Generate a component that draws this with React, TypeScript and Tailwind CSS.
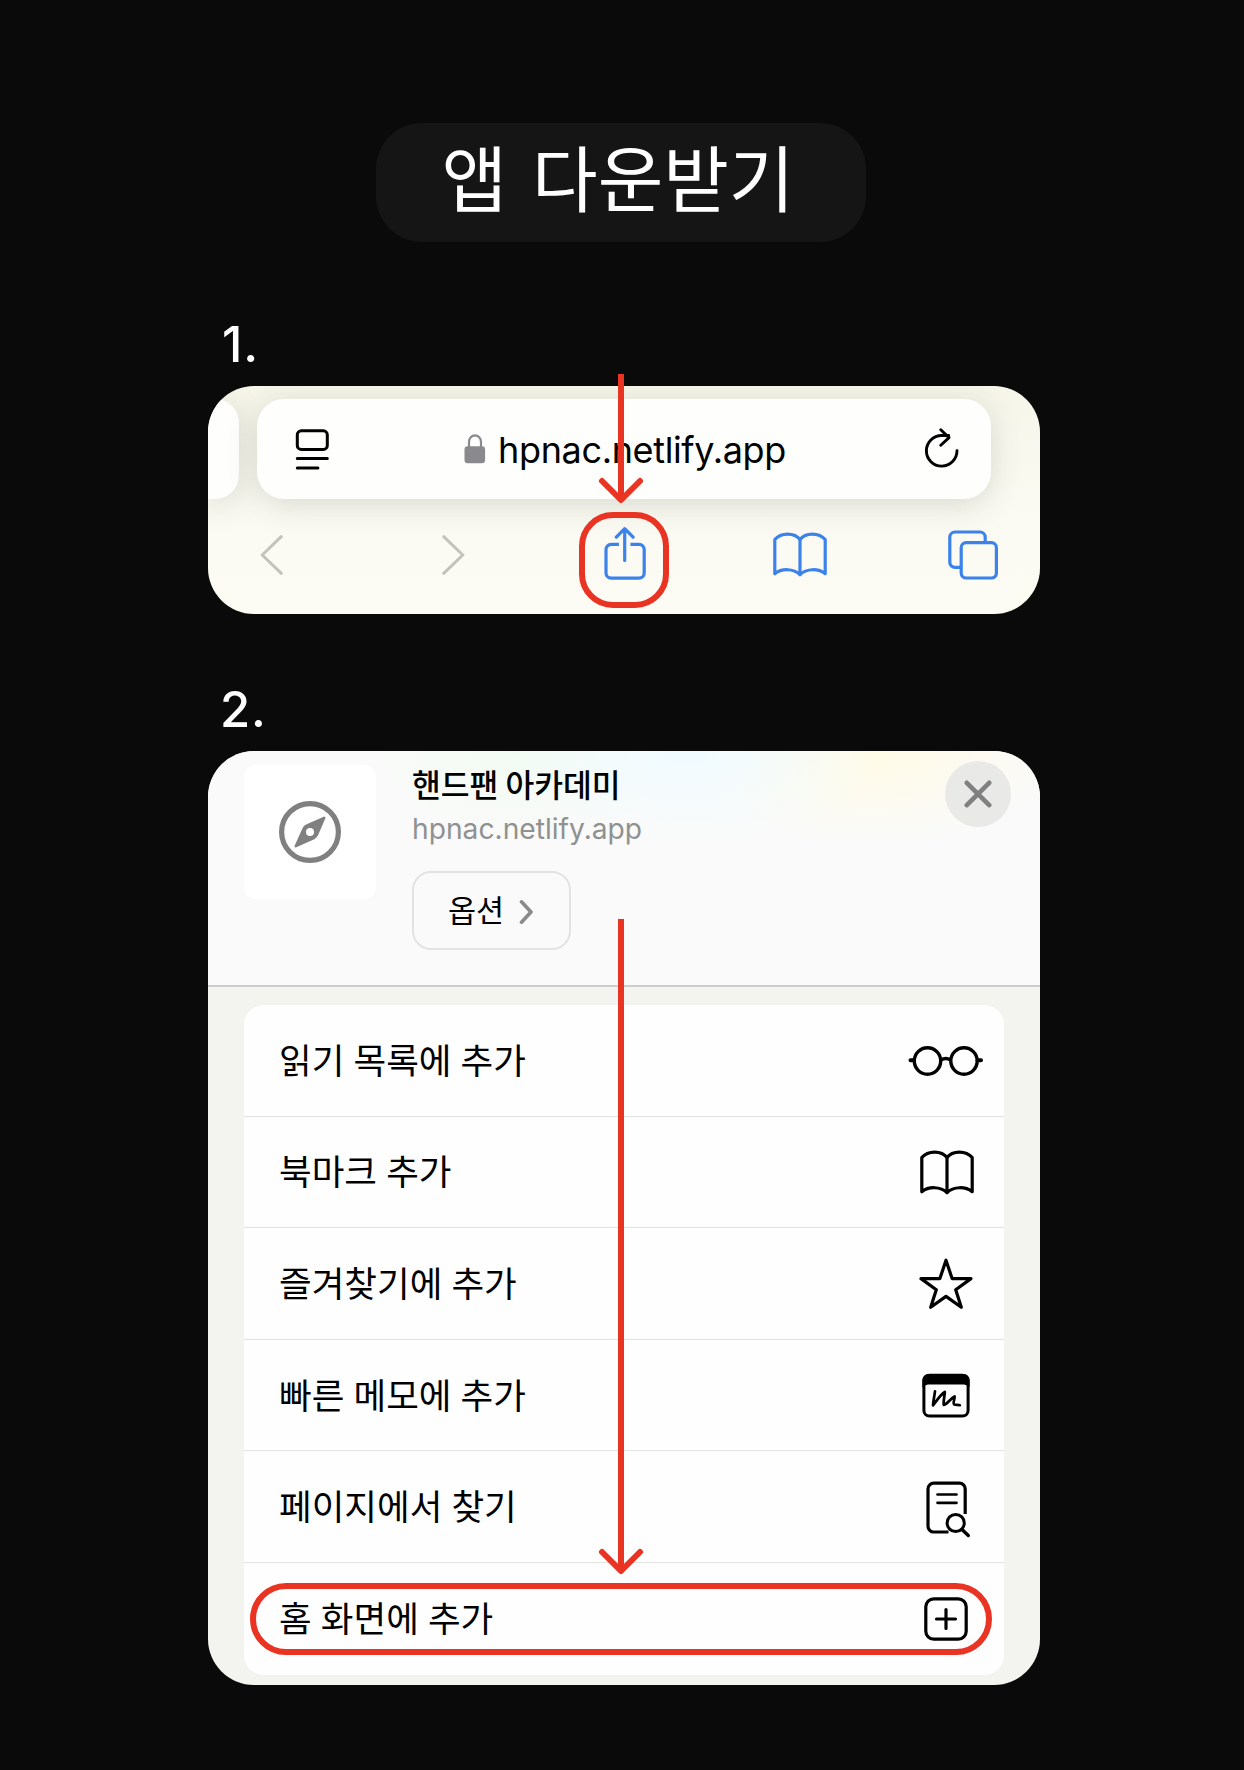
import React from "react";

type IconProps = { className?: string };

const stroke = {
  fill: "none",
  stroke: "currentColor",
  strokeLinecap: "round" as const,
  strokeLinejoin: "round" as const,
};

function ReaderIcon({ className }: IconProps) {
  return (
    <svg className={className} width="34" height="42" viewBox="0 0 34 42" {...stroke} strokeWidth="3">
      <rect x="2.3" y="1.8" width="30" height="18.6" rx="4" />
      <path d="M2.3 29.4H32.3M2.3 39H22.9" />
    </svg>
  );
}

function LockIcon({ className }: IconProps) {
  return (
    <svg className={className} width="22" height="30" viewBox="0 0 22 30">
      <path d="M5 13V8a6 6.6 0 0 1 12 0v5" fill="none" stroke="currentColor" strokeWidth="2.2" />
      <rect x="0.5" y="12.3" width="20.6" height="17" rx="3.2" fill="currentColor" />
    </svg>
  );
}

function ReloadIcon({ className }: IconProps) {
  return (
    <svg className={className} width="34" height="40" viewBox="0 0 34 40" {...stroke} strokeWidth="2.9">
      <path d="M32 22.7a15.3 15.3 0 1 1-15.3-15.200h7" />
      <path d="M15.8 1.7l8.2 7.900-8.2 7.700" />
    </svg>
  );
}

function ChevronIcon({ className }: IconProps) {
  return (
    <svg className={className} width="24" height="40" viewBox="0 0 24 40" {...stroke} strokeWidth="3">
      <path d="M21.3 1.7L2.2 20l19.1 18.3" />
    </svg>
  );
}

function ShareIcon({ className }: IconProps) {
  return (
    <svg className={className} width="42" height="54" viewBox="0 0 42 54" {...stroke} strokeWidth="3.2">
      <path
        strokeLinecap="butt"
        d="M15 17.3H7.2A5.2 5.2 0 0 0 2 22.5V46a5.200 5.200 0 0 0 5.200 5.200H35a5.200 5.200 0 0 0 5.200-5.200V22.500a5.200 5.200 0 0 0-5.200-5.200H26.400"
      />
      <path d="M20.700 33.500V2.200M12.300 10.200l8.400-8.500 8.400 8.500" />
    </svg>
  );
}

function BookIcon({ className }: IconProps) {
  return (
    <svg className={className} width="54" height="45" viewBox="0 0 54 45" {...stroke} strokeWidth="3.200">
      <path d="M1.800 7.500C8 .2 21.500.2 27 7.500 32.500.2 46 .2 52.200 7.500V41.700C45.500 36.300 33.500 36.200 27 42.600 20.500 36.200 8.500 36.300 1.800 41.700Z" />
      <path d="M27 7.500V42.600" />
    </svg>
  );
}

function TabsIcon({ className }: IconProps) {
  return (
    <svg className={className} width="50" height="50" viewBox="0 0 50 50" {...stroke} strokeWidth="3.200">
      <path strokeLinecap="butt" d="M37.200 12V7.200a5.200 5.200 0 0 0-5.200-5.200H7a5.200 5.200 0 0 0-5.200 5.200V32.200a5.200 5.200 0 0 0 5.200 5.200H12.500" />
      <rect x="13.200" y="12.700" width="35.200" height="35.300" rx="5" />
    </svg>
  );
}

function CompassIcon() {
  return (
    <svg width="62" height="62" viewBox="0 0 62 62" className="text-[#808080]">
      <circle cx="31" cy="31" r="28.400" fill="none" stroke="currentColor" strokeWidth="5.200" />
      <path
        fill="currentColor"
        stroke="currentColor"
        strokeWidth="2.500"
        strokeLinejoin="round"
        d="M45.200 16.800L38 33.600Q37 36 34.800 37.200L16.800 45.200 24.500 28Q25.500 25.600 27.600 24.600Z"
      />
      <circle cx="31" cy="31" r="4" fill="#fff" />
    </svg>
  );
}

function GlassesIcon() {
  return (
    <svg width="76" height="32" viewBox="0 0 76 32" {...stroke} strokeWidth="3.400">
      <circle cx="19.500" cy="16" r="13.200" />
      <circle cx="56" cy="16" r="13.200" />
      <path d="M33.200 14.800Q37.700 12.200 42.300 14.800" />
      <path strokeWidth="4" d="M2.500 15.300H6M69.500 15.300H73" />
    </svg>
  );
}

function StarIcon() {
  return (
    <svg width="54" height="52" viewBox="0 0 54 52" {...stroke} strokeWidth="3.200">
      <path d="M27 2.200L33.100 20.600H52L36.700 31.800 42.300 49.300 27 38.400 11.700 49.300 17.300 31.800 2 20.600H20.900Z" />
    </svg>
  );
}

function QuickNoteIcon() {
  return (
    <svg width="48" height="45" viewBox="0 0 48 45" {...stroke} strokeWidth="3">
      <rect x="1.900" y="2.300" width="44.200" height="40.800" rx="5.500" />
      <path fill="currentColor" stroke="none" d="M.4 14V7a6 6 0 0 1 6-6h35.200a6 6 0 0 1 6 6v7H46q-1-2.500-4-2.500H6q-3 0-4 2.500Z" />
      <path
        strokeWidth="2.700"
        d="M13 18.400C12.400 23 11.200 28 11 32.400C14.500 28 18 22 22.800 19C22.800 23 21 28 21.800 32C25.500 31 28 26 32.600 23.500C33 26 30.500 29.500 32 31.300C34 32.500 36 31.500 37.800 32.200"
      />
    </svg>
  );
}

function FindOnPageIcon() {
  return (
    <svg width="45" height="57" viewBox="0 0 45 57" {...stroke} strokeWidth="3.200">
      <path strokeLinecap="butt" d="M39.200 33V8a5.800 5.800 0 0 0-5.800-5.800H7.800A5.800 5.800 0 0 0 2 8V45.200A5.800 5.800 0 0 0 7.800 51H22.500" />
      <path strokeWidth="2.700" d="M11.500 13.500H30.500M11.500 21.800H30.500" />
      <circle cx="29.700" cy="42" r="8.600" strokeWidth="3" />
      <path strokeWidth="3.400" d="M36 48.500L42.300 54.500" />
    </svg>
  );
}

function PlusSquareIcon() {
  return (
    <svg width="44" height="44" viewBox="0 0 44 44" {...stroke} strokeWidth="3.200">
      <rect x="1.800" y="1.800" width="40.400" height="40.400" rx="8" />
      <path d="M22 12.500V31.500M12.500 22H31.500" />
    </svg>
  );
}

function ArrowHead() {
  return (
    <svg width="46" height="28" viewBox="0 0 46 28" {...stroke} strokeWidth="6" className="-mt-[23px] shrink-0">
      <path d="M4 4L23 23 42 4" />
    </svg>
  );
}

const actions = [
  { label: "읽기 목록에 추가", icon: <GlassesIcon />, nudge: "pt-[2px]" },
  { label: "북마크 추가", icon: <BookIcon />, nudge: "pt-[2px] pl-[2px]" },
  { label: "즐겨찾기에 추가", icon: <StarIcon />, nudge: "pt-px" },
  { label: "빠른 메모에 추가", icon: <QuickNoteIcon />, nudge: "pt-px" },
  { label: "페이지에서 찾기", icon: <FindOnPageIcon />, nudge: "pt-[6px] pl-[5px]" },
  { label: "홈 화면에 추가", icon: <PlusSquareIcon />, nudge: "pt-px" },
];

function StepLabel({ children }: { children: React.ReactNode }) {
  return <div className="pt-px font-['Inter'] text-[49px] leading-[60px] font-medium tracking-[0.8px]">{children}</div>;
}

function BrowserBar() {
  return (
    <section className="relative h-[228px] w-[832px] rounded-[46px] bg-linear-to-b from-[#f5f5e9] via-[#fafaf2] to-[#fcfcf5] text-black">
      <div className="h-full overflow-hidden rounded-[46px]">
        <div className="flex gap-[18px] pt-[13px]">
          <div className="h-[100px] w-[31px] rounded-r-[24px] bg-[#fefefd] shadow-[0_6px_30px_rgba(60,65,50,0.17)]" />
          <div className="flex h-[100px] w-[734px] items-center rounded-[27px] bg-[#fefefd] pr-[32px] pl-[38px] shadow-[0_6px_30px_rgba(60,65,50,0.17)]">
            <ReaderIcon className="mt-0.5" />
            <div className="flex flex-1 items-center pl-[135px]">
              <LockIcon className="text-[#8a8a8e]" />
              <span className="mt-px ml-[12px] font-['Inter'] text-[36px] leading-[44px] tracking-[-0.350px]">hpnac.netlify.app</span>
            </div>
            <ReloadIcon className="-mt-0.5" />
          </div>
        </div>
        <nav className="mt-[27px] flex h-[56px] items-center justify-between pr-[42px] pl-[52px] text-[#3b82ea]">
          <ChevronIcon className="mt-px text-[#c3c3bd]" />
          <ChevronIcon className="mt-px ml-[36px] rotate-180 text-[#c3c3bd]" />
          <ShareIcon className="ml-[17px]" />
          <BookIcon className="ml-[6px]" />
          <TabsIcon className="mt-px" />
        </nav>
      </div>
      <div className="absolute top-[126px] left-[371px] h-[96px] w-[90px] rounded-[34px] border-[6px] border-[#e93323]" />
      <div className="absolute -top-[12px] left-[390px] flex flex-col items-center text-[#e93323]">
        <div className="h-[126px] w-[6px] bg-[#e93323]" />
        <ArrowHead />
      </div>
    </section>
  );
}

function ShareSheet() {
  return (
    <section className="relative h-[934px] w-[832px] rounded-[46px] bg-[#f3f4ef] text-black">
      <div className="flex h-full flex-col overflow-hidden rounded-[46px]">
        <header className="flex h-[236px] shrink-0 items-start border-b-2 border-[#cdcecb] bg-[#fafafa] bg-[radial-gradient(ellipse_190px_90px_at_480px_0,#f0fbff,transparent),radial-gradient(ellipse_190px_90px_at_665px_0,#fffbe6,transparent),radial-gradient(ellipse_160px_90px_at_310px_0,#f2fbf2,transparent)] pl-[36px]">
          <div className="mt-[14px] flex h-[134px] w-[132px] items-center justify-center rounded-[12px] bg-white">
            <CompassIcon />
          </div>
          <div className="ml-[36px] flex flex-1 flex-col items-start pt-[13px]">
            <h2 className="text-[31.300px] leading-[40px] font-medium">핸드팬 아카데미</h2>
            <p className="mt-[6px] font-['Inter'] text-[28.200px] leading-[38px] text-[#8f9190]">hpnac.netlify.app</p>
            <button className="mt-[23px] flex h-[79px] w-[159px] items-center rounded-[19px] border-2 border-[#e3e3e3] pl-[34px]">
              <span className="-mt-[4px] text-[30.500px] leading-[40px]">옵션</span>
              <svg width="15" height="26" viewBox="0 0 15 26" {...stroke} strokeWidth="3.600" className="mt-0.5 ml-[15px] text-[#8a8a8a]">
                <path d="M2.500 2.800L12 13 2.500 23.200" />
              </svg>
            </button>
          </div>
          <button className="mt-[10px] mr-[29px] flex size-[66px] items-center justify-center rounded-full bg-[#e9e9e8] text-[#808080]">
            <svg width="28" height="28" viewBox="0 0 28 28" {...stroke} strokeWidth="4.600">
              <path d="M2.800 2.800L25.200 25.200M25.200 2.800L2.800 25.200" />
            </svg>
          </button>
        </header>
        <ul className="mx-[36px] mt-[18px] w-[760px] rounded-[20px] bg-[#fefefe]">
          {actions.map(({ label, icon, nudge }) => (
            <li key={label} className="flex h-[111.6px] items-center justify-between border-b border-[#e2e2e1] last:border-0">
              <span className="-mt-[3px] pl-[35px] text-[35.500px] leading-[50px] [word-spacing:1.200px]">{label}</span>
              <span className={`flex w-[117px] items-center justify-center ${nudge}`}>{icon}</span>
            </li>
          ))}
        </ul>
      </div>
      <div className="absolute top-[832px] left-[42px] h-[72px] w-[742px] rounded-full border-[6px] border-[#e93323]" />
      <div className="absolute top-[168px] left-[390px] flex flex-col items-center text-[#e93323]">
        <div className="h-[652px] w-[6px] bg-[#e93323]" />
        <ArrowHead />
      </div>
    </section>
  );
}

export default function App() {
  return (
    <main className="flex h-[1770px] w-[1244px] flex-col overflow-hidden bg-[#0a0a0a] pt-[123px] pl-[208px] font-['Noto_Sans_CJK_KR',sans-serif] text-white">
      <h1 className="ml-[168px] flex h-[119px] w-[490px] items-center justify-center rounded-[46px] bg-[#151515] pr-[6px] pb-[15px] text-[71.300px] leading-[100px] font-normal [word-spacing:9px]">
        앱 다운받기
      </h1>
      <div className="mt-[72px] flex h-[72px] pl-[14px]">
        <StepLabel>1.</StepLabel>
      </div>
      <BrowserBar />
      <div className="mt-[65px] flex h-[72px] pl-[12px]">
        <StepLabel>2.</StepLabel>
      </div>
      <ShareSheet />
    </main>
  );
}
